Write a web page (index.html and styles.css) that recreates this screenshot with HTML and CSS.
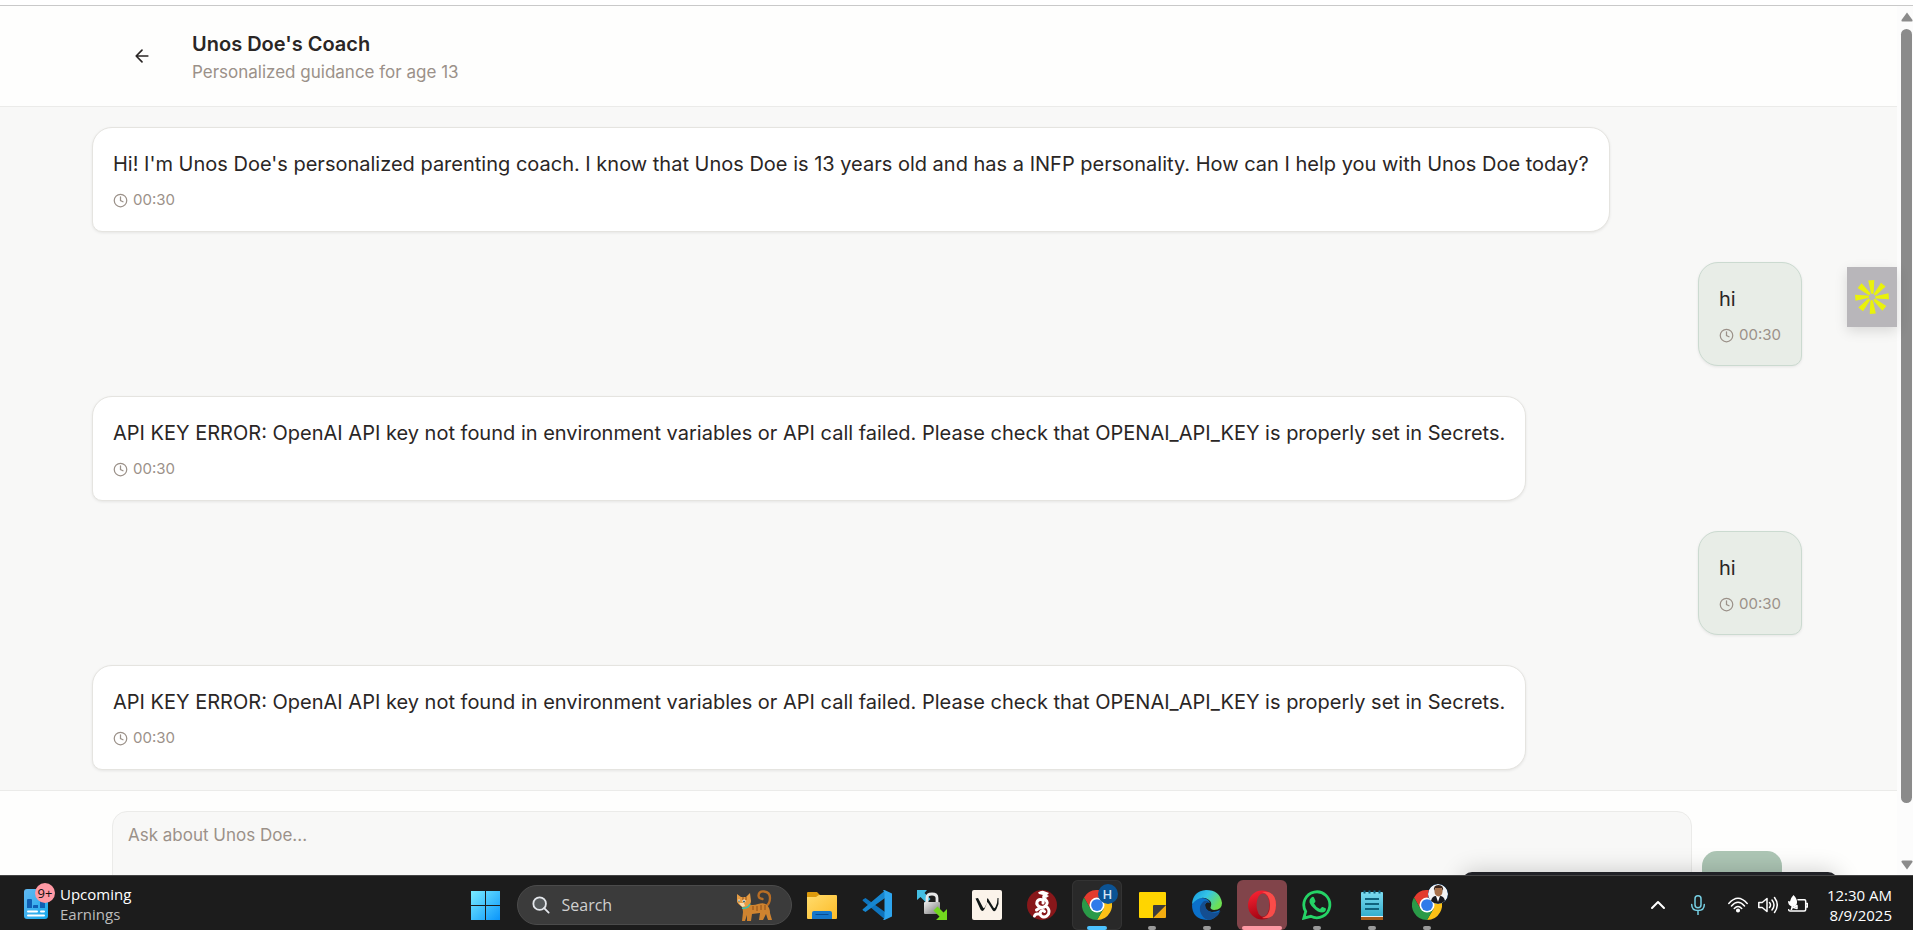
FILE: index.html
```html
<!DOCTYPE html>
<html lang="en">
<head>
<meta charset="utf-8">
<title>Unos Doe's Coach</title>
<link rel="stylesheet" href="styles.css">
</head>
<body>
<svg class="defs" aria-hidden="true">
  <symbol id="clock" viewBox="0 0 24 24"><circle cx="12" cy="12" r="10"/><path d="M12 6v6l4 2"/></symbol>
  <symbol id="chrome" viewBox="0 0 48 48">
    <path fill="#e33b2e" d="M3.2 12A24 24 0 0 1 44.8 12H24L13.6 30z"/>
    <path fill="#fbc116" d="M44.8 12A24 24 0 0 1 24 48L34.4 30 30 12z"/>
    <path fill="#2a9a48" d="M24 48A24 24 0 0 1 3.2 12L13.6 30 34.4 30z"/>
    <circle cx="24" cy="24" r="12" fill="#fff"/><circle cx="24" cy="24" r="9.4" fill="#2f7bea"/>
  </symbol>
</svg>

<div class="viewport">
  <main class="page">
    <header class="header">
      <button class="back" aria-label="Back">
        <svg viewBox="0 0 24 24"><path d="m12 19-7-7 7-7M19 12H5"/></svg>
      </button>
      <div class="heading">
        <h1 class="title">Unos Doe's Coach</h1>
        <p class="subtitle">Personalized guidance for age 13</p>
      </div>
    </header>

    <section class="messages" aria-label="Conversation">
      <article class="bubble">
        <p class="text">Hi! I'm Unos Doe's personalized parenting coach. I know that Unos Doe is 13 years old and has a INFP personality. How can I help you with Unos Doe today?</p>
        <div class="time"><svg><use href="#clock"/></svg><time>00:30</time></div>
      </article>
      <article class="bubble own">
        <p class="text">hi</p>
        <div class="time"><svg><use href="#clock"/></svg><time>00:30</time></div>
      </article>
      <article class="bubble">
        <p class="text">API KEY ERROR: OpenAI API key not found in environment variables or API call failed. Please check that OPENAI_API_KEY is properly set in Secrets.</p>
        <div class="time"><svg><use href="#clock"/></svg><time>00:30</time></div>
      </article>
      <article class="bubble own">
        <p class="text">hi</p>
        <div class="time"><svg><use href="#clock"/></svg><time>00:30</time></div>
      </article>
      <article class="bubble">
        <p class="text">API KEY ERROR: OpenAI API key not found in environment variables or API call failed. Please check that OPENAI_API_KEY is properly set in Secrets.</p>
        <div class="time"><svg><use href="#clock"/></svg><time>00:30</time></div>
      </article>
    </section>

    <form class="composer">
      <textarea class="prompt" aria-label="Message" placeholder="Ask about Unos Doe..."></textarea>
      <button class="send" type="button" aria-label="Send"></button>
    </form>
  </main>

  <div class="scrollbar" aria-hidden="true">
    <svg class="arrow" viewBox="0 0 12 10"><path d="M6 .5 11.5 8q.5 1.500-1 1.500h-9Q0 9.500.5 8z"/></svg>
    <div class="track"><div class="thumb"></div></div>
    <svg class="arrow" viewBox="0 0 12 10"><path d="M6 9.500 11.500 2q.5-1.500-1-1.500h-9Q0 .5.5 2z"/></svg>
  </div>

  <button class="assistant" aria-label="Assistant">
    <svg viewBox="-18 -18 36 36">
      <path id="ray" d="M-3.800-16.500 2.300-17 1.600-4Q.4-2-1-4z"/>
      <use href="#ray" transform="rotate(45)"/><use href="#ray" transform="rotate(90)"/><use href="#ray" transform="rotate(135)"/><use href="#ray" transform="rotate(180)"/><use href="#ray" transform="rotate(225)"/><use href="#ray" transform="rotate(270)"/><use href="#ray" transform="rotate(315)"/>
    </svg>
  </button>
  <div class="popup"></div>
</div>

<footer class="taskbar">
  <button class="widget">
    <span class="widget-icon">
      <svg viewBox="0 0 24 30">
        <defs><linearGradient id="doc" x2="1" y2="1"><stop stop-color="#62b8f2"/><stop offset="1" stop-color="#16a9ec"/></linearGradient></defs>
        <rect width="24" height="30" rx="3" fill="url(#doc)"/>
        <path fill="#0f5fb4" d="M3 11q0-1 1-1h3q1 0 1 1v8H3zM9 17q0-1 1-1h4v3H9zM16 12h5v7h-5z"/>
        <path stroke="#fff" stroke-width="2" stroke-linecap="round" d="M4 22.500h9M17 22.500h3M4 26.500h16"/>
      </svg>
      <span class="badge">9+</span>
    </span>
    <span class="lines"><span>Upcoming</span><span class="dim">Earnings</span></span>
  </button>

  <nav class="apps" aria-label="Taskbar">
    <button class="app" aria-label="Start">
      <svg viewBox="0 0 30 30"><defs><linearGradient id="win" gradientUnits="userSpaceOnUse" x2="30" y2="30"><stop stop-color="#7df0ff"/><stop offset="1" stop-color="#0a95fb"/></linearGradient></defs>
      <path fill="url(#win)" d="M1 1h14v14H1zM16 1h14v14H16zM1 16h14v14H1zM16 16h14v14H16z"/></svg>
    </button>
    <label class="search">
      <svg class="lens" viewBox="0 0 20 20"><circle cx="8.500" cy="8.500" r="7" fill="#565a5c"/><path d="m13.500 13.500 5 5"/></svg>
      <input type="text" placeholder="Search" aria-label="Search">
      <svg class="cat" viewBox="0 0 36 31">
        <path d="M29 17q5-3 5-9T28 1.500q-5-.5-5.500 4 0 3 4 3.500" fill="none" stroke="#b96e25" stroke-width="2.300" stroke-linecap="round"/>
        <path fill="#cf832f" d="M10 14q7 2 12 0 6-2 9 1 3 3 3 8l2 7h-4l-2-6-3 6h-4l1-7-8 1-1 7h-4v-6l-2 6H6l1-9-1-7z"/>
        <path fill="#e59b43" d="M1 4l4 3 5 0 4-4 1 8q0 5-6 6-5 0-8-5z"/>
        <path fill="#f7ddb0" d="M3 13h5l1 3-3 1z"/>
        <path stroke="#8f4f18" stroke-width="1" fill="none" d="M7 7v3M10 7v3M17 16v4M21 16v5M25 15v5M29 15v5"/>
        <path stroke="#31c4b1" stroke-width="1.500" fill="none" d="M6 18q6 1 8-4"/>
        <circle cx="3" cy="10.500" r="1.100" fill="#fff"/><circle cx="8" cy="11" r="1.500" fill="#fff"/><circle cx="3" cy="11" r=".7" fill="#174e57"/><circle cx="8" cy="11.500" r=".9" fill="#174e57"/>
      </svg>
    </label>
    <button class="app" aria-label="File Explorer">
      <svg viewBox="0 0 30 30"><defs><linearGradient id="fold" x2="1" y2="1"><stop stop-color="#ffdc6d"/><stop offset="1" stop-color="#fdbb27"/></linearGradient></defs>
      <path fill="#dc9a0c" d="M0 3q0-1 1-1h9l3 3h5v5H0z"/><path fill="url(#fold)" d="M0 7h9l3-2h17q1 0 1 1v22q0 1-1 1H1q-1 0-1-1z"/><path fill="#1577cb" d="M5 29v-6q0-2 2-2h16q2 0 2 2v6z"/><path stroke="#0a4c91" d="M8.500 24.500h13"/></svg>
    </button>
    <button class="app" aria-label="Visual Studio Code">
      <svg viewBox="0 0 30 30"><path fill="#0e74bd" d="M1 9.500 3.500 8 23 22v7.500L1 11q-1-.7 0-1.500z"/><path fill="#1686d0" d="M1 20.500 3.500 22 23 8V.5L1 19q-1 .7 0 1.500z"/><path fill="#2ea5ee" d="M22.500 0 30 3.500v23L22.500 30 20.800 29.500Q22.500 29 22.500 27V3q0-2-1.700-2.500z"/></svg>
    </button>
    <button class="app" aria-label="WinSCP">
      <svg viewBox="0 0 30 30"><defs><linearGradient id="lock" x2="1" y2="1"><stop stop-color="#eee"/><stop offset="1" stop-color="#777"/></linearGradient></defs>
      <path fill="#44bfe3" d="M0 0h10L7.500 3l6 6-4 4-6-6L0 10z"/><path d="M10 14V8q0-4 5-4t5 4v6" fill="none" stroke="#e6e6e6" stroke-width="2.800"/><rect x="7" y="12" width="16" height="12" rx="1" fill="url(#lock)"/><path fill="#72d91e" d="M30 30H19l3.500-3.500-6-6 4-4 6 6L30 19z"/></svg>
    </button>
    <button class="app" aria-label="Writer">
      <svg viewBox="0 0 30 30"><rect width="30" height="30" rx="2" fill="#fbf3ea"/><path fill="#101716" d="M3.500 8.500 6 8l5 9.500q1 1.500 2-.5l2-4V8.500h1l5.500 9q1 1.500 2-.5l1.500-4 .5-5h1v6l-2 5q-2 4-4 1l-5-8-3 7q-2 3.500-4 .5z"/></svg>
    </button>
    <button class="app" aria-label="WireGuard">
      <svg viewBox="0 0 30 30"><circle cx="15" cy="15" r="15" fill="#88171a"/><path fill="#fff" d="M11 2.500Q15-.5 18 1.500l4 1.500-2 2 2 1-3 2q-3-1-3-3l-4-1z"/><path fill="none" stroke="#fff" stroke-width="3" stroke-linecap="round" d="M17 6q-1 2 1.500 3.500 3 3 .5 6T13 17q-4-2-3-5t4-2.500q3 .5 2 3.500M9.500 20q3-2.500 6-2.500M20 17q3 3 1.500 7-2.500 4-6.500 2.500-3-2-1.500-4.500 2-2.500 4-.5M7.500 26q1-2.500 3.500-2"/></svg>
    </button>
    <button class="app active" aria-label="Chrome, profile H">
      <svg><use href="#chrome"/></svg><span class="profile">H</span>
    </button>
    <button class="app running" aria-label="Sticky Notes">
      <svg viewBox="0 0 30 30"><path fill="#ffd500" d="M3 2h25q1 0 1 1v12L16 28H3q-1 0-1-1V3q0-1 1-1z"/><path fill="#f3ac10" d="M29 15v12q0 1-1 1H16z"/><path fill="#3b3b3d" d="M16 16q0-1 1-1h12L16 28z"/></svg>
    </button>
    <button class="app running" aria-label="Edge">
      <svg viewBox="0 0 30 30"><defs><linearGradient id="edge" x2="1" y2=".5"><stop stop-color="#1295dd"/><stop offset=".5" stop-color="#35c5e7"/><stop offset="1" stop-color="#6ee052"/></linearGradient></defs>
      <path fill="#0b70c9" d="M0 15Q1 8 9 8q7 0 9 5-4-2-5 2 0 6 7 7 4 0 8-2-4 10-13 10Q0 29 0 15z"/><path fill="#144e91" d="M12 11q-5 4-4 10 2 7 8 9 9-1 12.500-9Q24 24 19 22q-6-2-6-8 1-2 4-2-2-2-5-1z"/><path fill="url(#edge)" d="M0 14Q1 1 14 0q14 0 16 13 0 7-8 7-5-1-3-4 1-4-2-6Q9 4 0 14z"/></svg>
    </button>
    <button class="app attention" aria-label="Opera">
      <svg viewBox="0 0 30 30"><defs><linearGradient id="op" x2=".3" y2="1"><stop stop-color="#ff2435"/><stop offset="1" stop-color="#a50513"/></linearGradient></defs><ellipse cx="15" cy="15" rx="14" ry="14.500" fill="url(#op)"/><path fill="#f94c49" d="M15 2q14-2 14 13T15 28q8-2 8-13T15 2z"/><ellipse cx="16" cy="15" rx="6.500" ry="11.500" fill="#81444a"/></svg>
    </button>
    <button class="app running" aria-label="WhatsApp">
      <svg viewBox="0 0 30 30"><path fill="none" stroke="#25d366" stroke-width="2.800" d="M1.800 28.200 3.700 21.500A13 13 0 1 1 8.800 26.300z"/><path fill="#25d366" d="M9 8q2-2 3-.5l1.500 3.500q0 1-1.500 2.500 2 4 6 5.500l2-2q1-.5 4 1.500 0 4-4 4-4 0-8.500-4.500T7.500 11q0-2 1.500-3z"/></svg>
    </button>
    <button class="app running" aria-label="Notepad">
      <svg viewBox="0 0 30 30"><defs><linearGradient id="np" x2="0" y2="1"><stop stop-color="#7cdbf0"/><stop offset="1" stop-color="#35aece"/></linearGradient></defs><path fill="#a65a19" d="M4 25h22v5H4z"/><path fill="#eee" d="M4 24h22v3H4z"/><path fill="url(#np)" d="M5 2h20q1 0 1 1v23H4V3q0-1 1-1z"/><path stroke="#10627d" stroke-width="2" d="M8 9h14M8 14h14M8 19h14M7.500.5v3M12.500.5v3M17.500.5v3M22.500.5v3"/></svg>
    </button>
    <button class="app running" aria-label="Chrome, second profile">
      <svg><use href="#chrome"/></svg>
      <svg class="profile photo" viewBox="0 0 20 20"><circle cx="10" cy="10" r="10" fill="#f3f4f6"/><path fill="#17181f" d="M3 17q1-5 5-5h4q4 0 5 5-3 3-7 3t-7-3z"/><path fill="#fff" d="m8 12 2 6 2-6z"/><ellipse cx="10.500" cy="7.500" rx="4" ry="5" fill="#a8714b"/><path fill="#3d261b" d="M6 7q-1-6 4.500-6T15 7l-1.500-3h-6z"/></svg>
    </button>
  </nav>

  <div class="tray">
    <button class="tray-item wide" aria-label="Hidden icons"><svg viewBox="0 0 20 20"><path stroke-width="2" d="m4 13 6-6 6 6"/></svg></button>
    <button class="tray-item wide mic" aria-label="Microphone"><svg viewBox="0 0 20 20"><rect x="7" y=".8" width="6" height="12" rx="3"/><path d="M3.700 9.500q0 6 6.300 6t6.300-6M10 15.500v4"/></svg></button>
    <button class="tray-item" aria-label="Wi-Fi"><svg viewBox="0 0 20 20"><path d="M.8 8.500Q10-2 19.200 8.500M3.500 11Q10 3.500 16.500 11M6.300 13.500q3.700-4 7.400 0"/><circle cx="10" cy="15.500" r="1.300" fill="#fff"/></svg></button>
    <button class="tray-item" aria-label="Volume"><svg viewBox="0 0 20 20"><path d="M.8 7.500h3.400L9 3.500v13l-4.800-4H.8zM11.500 7.500q2 2.500 0 5M14 5q4 5 0 10M16.500 2.500q5.500 7.500 0 15"/></svg></button>
    <button class="tray-item" aria-label="Battery"><svg viewBox="0 0 20 20"><path d="M10 4.800h6.500q1.200 0 1.200 1.200v8.500q0 1.500-1.500 1.500H2q-1.300 0-1.300-1.300M18 8.500h1.500v3.500H18"/><path fill="#fff" stroke="none" d="M5.500 0q4 4 3.500 8-.5 3-3.500 3.500L4 15H2.500l1-3.500Q0 10 0 6l2 .5Q2.500 3 5.500 0z"/><path d="m5.500 12.500 3.500-2v3z"/></svg></button>
    <button class="clock"><span>12:30 AM</span><span>8/9/2025</span></button>
  </div>
</footer>
</body>
</html>
```

FILE: styles.css
```css
* { box-sizing: border-box; }

body {
  margin: 0;
  height: 100vh;
  display: flex;
  flex-direction: column;
  overflow: hidden;
  background: #fff;
  font-family: Inter, "Liberation Sans", sans-serif;
  color: #2a2625;
}

button {
  border: 0;
  padding: 0;
  background: none;
  color: inherit;
  font: inherit;
}

svg { display: block; }
h1, p { margin: 0; }
.defs { position: absolute; width: 0; height: 0; }

/* Browser viewport */
.viewport {
  position: relative;
  flex: 1;
  min-height: 0;
  display: flex;
  margin-top: 5px;
  border-top: 1px solid #c9c9c9;
  overflow: hidden;
}

.page {
  flex: 1;
  min-width: 0;
  background: #f8f8f7;
  overflow: hidden;
}

.header {
  display: flex;
  align-items: center;
  gap: 24px;
  height: 101px;
  padding: 0 116px;
  background: #fefefd;
  border-bottom: 1px solid #ebebe9;
}

.back {
  width: 52px;
  height: 40px;
  display: grid;
  place-items: center;
}

.back svg {
  width: 20px;
  height: 20px;
  fill: none;
  stroke: #2a2625;
  stroke-width: 2;
  stroke-linecap: round;
  stroke-linejoin: round;
}

.heading { padding-top: 4px; }

.title {
  font-size: 20px;
  line-height: 28px;
  font-weight: 600;
}

.subtitle {
  font-size: 17px;
  line-height: 28px;
  color: #9b9189;
}

.messages {
  display: flex;
  flex-direction: column;
  align-items: flex-start;
  gap: 30px;
  padding: 20px 95px 20px 92px;
}

.bubble {
  padding: 20px;
  min-height: 105px;
  background: #fff;
  border: 1px solid #e5e4e0;
  border-radius: 20px 20px 20px 10px;
  box-shadow: 0 1px 3px rgba(0, 0, 0, .08);
}

.own {
  align-self: flex-end;
  min-height: 104px;
  background: #e8ede7;
  border-color: #cbdad0;
  border-radius: 20px 20px 10px 20px;
}

.text {
  font-size: 20px;
  line-height: 32px;
}

.time {
  display: flex;
  align-items: center;
  gap: 5px;
  margin-top: 10px;
  font-size: 15px;
  line-height: 20px;
  color: #9b9189;
}

.time svg {
  width: 15px;
  height: 15px;
  fill: none;
  stroke: currentColor;
  stroke-width: 2;
  stroke-linecap: round;
}

.composer {
  display: flex;
  align-items: flex-end;
  gap: 10px;
  padding: 20px 115px 20px 112px;
  background: #fefefd;
  border-top: 1px solid #ebebe9;
}

.prompt {
  flex: 1;
  height: 100px;
  padding: 10px 15px;
  border: 1px solid #ebebe9;
  border-radius: 15px;
  background: #f8f8f7;
  font: 17px/26px Inter, "Liberation Sans", sans-serif;
  resize: none;
}

.prompt::placeholder { color: #9b9189; }

.send {
  width: 80px;
  height: 60px;
  border-radius: 15px;
  background: #adc6b5;
}

.scrollbar {
  width: 16px;
  display: flex;
  flex-direction: column;
  align-items: flex-end;
  padding: 6px 0 5px;
  background: #fcfcfc;
}

.arrow {
  width: 12px;
  height: 10px;
  fill: #8b8b8b;
}

.track {
  flex: 1;
  padding: 7px 1px 57px 0;
}

.thumb {
  width: 11px;
  height: 100%;
  border-radius: 6px;
  background: #8b8b8b;
}

.assistant {
  position: absolute;
  top: 261px;
  right: 16px;
  width: 50px;
  height: 60px;
  display: grid;
  place-items: center;
  background: #b8b6ba;
  box-shadow: 0 4px 12px rgba(0, 0, 0, .13);
}

.assistant svg {
  width: 36px;
  height: 36px;
  fill: #e9f20c;
}

.popup {
  position: absolute;
  right: 75px;
  bottom: -57px;
  width: 376px;
  height: 60px;
  border-radius: 10px;
  background: #202126;
  box-shadow: 0 0 24px rgba(0, 0, 0, .2);
}

/* Taskbar */
.taskbar {
  display: grid;
  grid-template-columns: 1fr auto 1fr;
  height: 55px;
  background: #1c1c1c;
  border-top: 1px solid #444;
  color: #fff;
  font: 15px/20px "Open Sans", "Noto Sans", sans-serif;
}

.widget {
  justify-self: start;
  display: flex;
  align-items: center;
  gap: 12px;
  padding: 2px 0 0 24px;
  text-align: left;
}

.widget-icon { position: relative; }
.widget-icon > svg { width: 24px; height: 30px; }

.badge {
  position: absolute;
  top: -6px;
  left: 11px;
  width: 20px;
  height: 20px;
  border-radius: 50%;
  background: #ff99a4;
  color: #111;
  font-size: 13px;
  line-height: 20px;
  text-align: center;
}

.lines, .clock {
  display: flex;
  flex-direction: column;
}

.dim { color: #bdbdbd; }

.apps {
  display: flex;
  align-items: center;
  gap: 5px;
  padding: 4px 2px 0 0;
}

.app {
  position: relative;
  width: 50px;
  height: 50px;
  display: grid;
  place-items: center;
  border-radius: 6px;
}

.app > svg { width: 30px; height: 30px; }

.active {
  background: #292929;
  box-shadow: inset 0 0 0 1px #333;
}

.active::after, .running::after, .attention::after {
  content: "";
  position: absolute;
  left: 50%;
  bottom: 0;
  width: 8px;
  height: 4px;
  border-radius: 2px;
  background: #9a9a9a;
  transform: translateX(-50%);
}

.active::after { width: 20px; background: #4cc2ff; }
.attention { background: #81444a; }
.attention::after { width: 40px; background: #ff99a4; }

.profile {
  position: absolute;
  top: 4px;
  right: 4px;
  width: 20px;
  height: 20px;
  border-radius: 50%;
  background: #0b5394;
  color: #d5e5f5;
  font-size: 13px;
  font-weight: 600;
  line-height: 20px;
  text-align: center;
}

.app > .photo { width: 20px; height: 20px; }

.search {
  display: flex;
  align-items: center;
  gap: 12px;
  width: 275px;
  height: 40px;
  margin-left: 2px;
  padding: 0 19px 0 14px;
  border-radius: 20px;
  border: 1px solid #4b4b4b;
  background: #3b3b3b;
}

.lens {
  width: 18px;
  height: 18px;
  fill: none;
  stroke: #e4e7ec;
  stroke-width: 2;
  stroke-linecap: round;
}

.search input {
  flex: 1;
  min-width: 0;
  padding: 0;
  border: 0;
  background: none;
  color: #fff;
  font: 16px/24px "Open Sans", "Noto Sans", sans-serif;
}

.search input::placeholder { color: #d0d0d0; }
.cat { width: 36px; height: 31px; }

.tray {
  justify-self: end;
  display: flex;
  align-items: center;
  padding: 3px 21px 0 0;
}

.tray-item {
  width: 30px;
  height: 40px;
  display: grid;
  place-items: center;
}

.wide { width: 40px; }
.mic { margin-right: 5px; }

.tray-item svg {
  width: 20px;
  height: 20px;
  fill: none;
  stroke: #fff;
  stroke-width: 1.5;
  stroke-linecap: round;
  stroke-linejoin: round;
}

.mic svg { stroke: #76cfe3; }

.clock {
  width: 79px;
  text-align: right;
}
```
